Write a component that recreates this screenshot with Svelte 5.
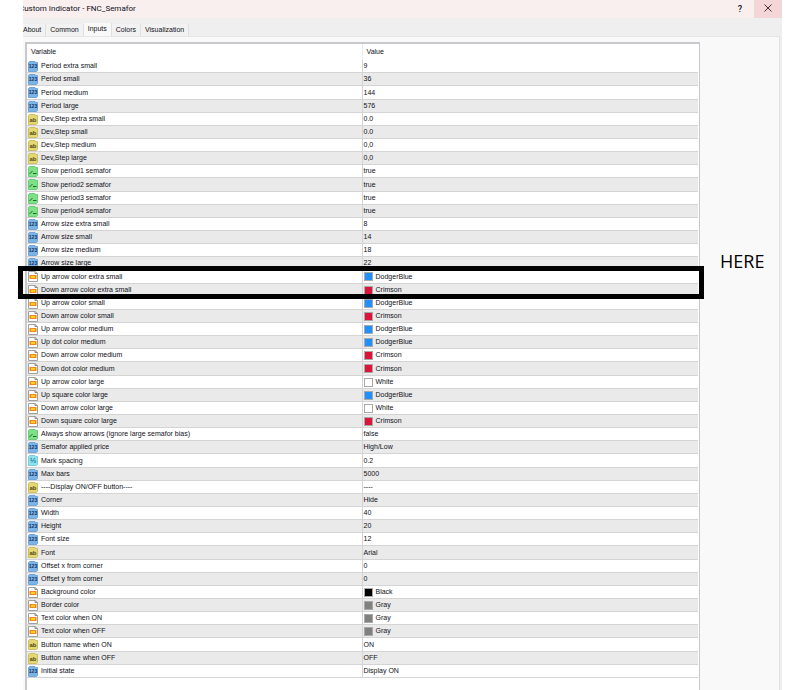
<script>
    const tabs = ['About', 'Common', 'Inputs', 'Colors', 'Visualization'];
    let active = $state('Inputs');

    const swatches = {
        DodgerBlue: '#1e90ff',
        Crimson: '#dc143c',
        White: '#ffffff',
        Black: '#000000',
        Gray: '#808080'
    };

    // [type, variable, value]
    const rows = [
        ['int', 'Period extra small', '9'],
        ['int', 'Period small', '36'],
        ['int', 'Period medium', '144'],
        ['int', 'Period large', '576'],
        ['text', 'Dev,Step extra small', '0.0'],
        ['text', 'Dev,Step small', '0.0'],
        ['text', 'Dev,Step medium', '0,0'],
        ['text', 'Dev,Step large', '0,0'],
        ['bool', 'Show period1 semafor', 'true'],
        ['bool', 'Show period2 semafor', 'true'],
        ['bool', 'Show period3 semafor', 'true'],
        ['bool', 'Show period4 semafor', 'true'],
        ['int', 'Arrow size extra small', '8'],
        ['int', 'Arrow size small', '14'],
        ['int', 'Arrow size medium', '18'],
        ['int', 'Arrow size large', '22'],
        ['color', 'Up arrow color extra small', 'DodgerBlue'],
        ['color', 'Down arrow color extra small', 'Crimson'],
        ['color', 'Up arrow color small', 'DodgerBlue'],
        ['color', 'Down arrow color small', 'Crimson'],
        ['color', 'Up arrow color medium', 'DodgerBlue'],
        ['color', 'Up dot color medium', 'DodgerBlue'],
        ['color', 'Down arrow color medium', 'Crimson'],
        ['color', 'Down dot color medium', 'Crimson'],
        ['color', 'Up arrow color large', 'White'],
        ['color', 'Up square color large', 'DodgerBlue'],
        ['color', 'Down arrow color large', 'White'],
        ['color', 'Down square color large', 'Crimson'],
        ['bool', 'Always show arrows (ignore large semafor bias)', 'false'],
        ['int', 'Semafor applied price', 'High/Low'],
        ['double', 'Mark spacing', '0.2'],
        ['int', 'Max bars', '5000'],
        ['text', '----Display ON/OFF button----', '----'],
        ['int', 'Corner', 'Hide'],
        ['int', 'Width', '40'],
        ['int', 'Height', '20'],
        ['int', 'Font size', '12'],
        ['text', 'Font', 'Arial'],
        ['int', 'Offset x from corner', '0'],
        ['int', 'Offset y from corner', '0'],
        ['color', 'Background color', 'Black'],
        ['color', 'Border color', 'Gray'],
        ['color', 'Text color when ON', 'Gray'],
        ['color', 'Text color when OFF', 'Gray'],
        ['text', 'Button name when ON', 'ON'],
        ['text', 'Button name when OFF', 'OFF'],
        ['int', 'Initial state', 'Display ON']
    ];

    const marked = 'Up arrow color extra small';
</script>

{#snippet icon(type)}
    <svg class="icon {type}" viewBox="0 0 10 11" aria-hidden="true">
        {#if type === 'color'}
            <path class="page" d="M0.5 0.5 H7 L9.5 2.5 V10.5 H0.5 Z" />
            <path class="fold" d="M7 0.5 V2.5 H9.5" />
            <rect class="amber" x="1.5" y="4" width="7" height="4" />
            <rect class="glow" x="3" y="5" width="4" height="2" />
        {:else}
            <path class="page" d="M0.5 1.5 L1.5 0.5 H7 L7.5 1.5 H9.5 V9.5 L8.5 10.5 H0.5 Z" />
            {#if type === 'int'}
                <text x="5" y="7" text-anchor="middle">123</text>
            {:else if type === 'text'}
                <text class="ab" x="5" y="8" text-anchor="middle">ab</text>
            {:else if type === 'double'}
                <text class="half" x="5" y="8" text-anchor="middle">½</text>
            {:else}
                <path class="line" d="M1.5 8 L4.5 5 M5 7.5 H8.5" />
            {/if}
        {/if}
    </svg>
{/snippet}

<div class="window">
    <header>
        <h1>Custom Indicator - FNC_Semafor</h1>
        <button class="help" aria-label="Help">?</button>
        <button class="close" aria-label="Close">
            <svg viewBox="0 0 8 8"><path d="M0.5 0.5 L7.5 7.5 M7.5 0.5 L0.5 7.5" /></svg>
        </button>
    </header>

    <nav>
        {#each tabs as tab}
            <button class:active={active === tab} onclick={() => active = tab}>{tab}</button>
        {/each}
    </nav>

    <main>
        <div class="panel">
            <table>
                <thead>
                    <tr><th>Variable</th><th>Value</th></tr>
                </thead>
                <tbody>
                    {#each rows as [type, name, value]}
                        <tr class:marked={name === marked}>
                            <td>
                                <div class="cell">{@render icon(type)}{name}</div>
                                {#if name === marked}<span class="frame"></span>{/if}
                            </td>
                            <td>
                                <div class="cell">
                                    {#if type === 'color'}
                                        <i class="swatch" style="background: {swatches[value]}"></i>
                                    {/if}
                                    {value}
                                </div>
                            </td>
                        </tr>
                    {/each}
                </tbody>
            </table>
        </div>
        <aside>HERE</aside>
    </main>
</div>

<style>
    :global(body) {
        background: #ffffff;
    }

    .window {
        display: flex;
        flex-direction: column;
        box-sizing: border-box;
        min-height: 100vh;
        margin: 0 18px 0 23px;
        background: #efefef;
        color: #101018;
        font-family: "Liberation Sans", Arial, sans-serif;
        font-size: 7px;
    }

    button {
        border: 0;
        padding: 0;
        background: none;
        color: inherit;
        font: inherit;
    }

    header {
        display: flex;
        height: 18px;
        overflow: hidden;
        background: #f9efef;
        font-family: Roboto, "Noto Sans", sans-serif;
    }

    h1 {
        flex: 1;
        margin: 0 0 0 -4px;
        font-size: 8px;
        font-weight: 400;
        line-height: 17px;
    }

    .help,
    .close {
        width: 28px;
    }

    .help {
        font-size: 9px;
        font-weight: 500;
        line-height: 16px;
    }

    .close {
        display: flex;
        align-items: center;
        justify-content: center;
        background: #f3d7d8;
    }

    .close svg {
        width: 8px;
        height: 8px;
        margin-bottom: 2px;
        fill: none;
        stroke: #3a3034;
    }

    nav {
        display: flex;
        align-items: flex-end;
        height: 18px;
    }

    nav button {
        height: 12px;
        padding: 0 4px;
        border-right: 1px solid #e0e0e0;
        background: #f2f2f2;
        line-height: 12px;
    }

    nav button:first-child {
        padding-left: 0;
    }

    nav .active {
        height: 13px;
        padding-bottom: 1px;
        background: #f9f9f9;
    }

    main {
        display: flex;
        flex: 1;
        margin-right: 2px;
        padding: 5px 0 0 2px;
        border-top: 1px solid #e6e6e6;
        border-right: 1px solid #e2e2e2;
        background: #f9f9f9;
    }

    .panel {
        flex: 1;
        border: 2px solid #c9c9cd;
        border-right-width: 1px;
        border-bottom: 0;
        background: #ffffff;
        padding-right: 1px;
    }

    table {
        width: 100%;
        table-layout: fixed;
        border-collapse: separate;
        border-spacing: 0;
    }

    th {
        box-sizing: border-box;
        height: 16px;
        padding: 0 0 0 4px;
        font-weight: 400;
        line-height: 16px;
        text-align: left;
    }

    th:first-child {
        width: 50%;
        border-right: 1px solid #ececec;
    }

    tbody tr {
        height: 13px;
    }

    tbody tr:nth-child(7n + 3) {
        height: 14px;
    }

    tbody tr:nth-child(even) {
        background: #eaeaea;
    }

    td {
        padding: 0 0 0 1px;
        border-bottom: 1px solid #d4d4d4;
        white-space: nowrap;
    }

    td:first-child {
        border-right: 1px solid #d4d4d4;
    }

    .cell {
        display: flex;
        align-items: center;
        gap: 3px;
        height: 12px;
        line-height: 12px;
    }

    .marked {
        position: relative;
        z-index: 1;
    }

    .frame {
        position: absolute;
        top: -4px;
        right: -6px;
        left: -9px;
        height: 23px;
        border: 5px solid #000000;
    }

    .swatch {
        box-sizing: border-box;
        width: 9px;
        height: 9px;
        border: 1px solid #a8a8a8;
    }

    .icon {
        width: 10px;
        height: 11px;
    }

    .icon text {
        fill: #12305a;
        font: bold 5px "Liberation Sans", sans-serif;
    }

    .icon .ab {
        fill: #4f4a10;
        font-size: 6px;
    }

    .icon .half {
        fill: #1d7f92;
        font-size: 8px;
    }

    .int .page {
        fill: #7db4e6;
        stroke: #6fa5d8;
    }

    .text .page {
        fill: #e3d873;
        stroke: #cdc05c;
    }

    .bool .page {
        fill: #7ee087;
        stroke: #68cc74;
    }

    .double .page {
        fill: #8fe2ee;
        stroke: #7bcfdd;
    }

    .color .page {
        fill: #fbfbfb;
        stroke: #a0a0a0;
    }

    .line {
        fill: none;
        stroke: #176a25;
    }

    .fold {
        fill: none;
        stroke: #8a8a8a;
    }

    .amber {
        fill: #f5871f;
    }

    .glow {
        fill: #ffd21f;
    }

    aside {
        width: 79px;
        padding: 206px 0 0 20px;
        box-sizing: border-box;
        color: #000000;
        font-family: "Open Sans", "Noto Sans", sans-serif;
        font-size: 18px;
        line-height: 26px;
    }
</style>
